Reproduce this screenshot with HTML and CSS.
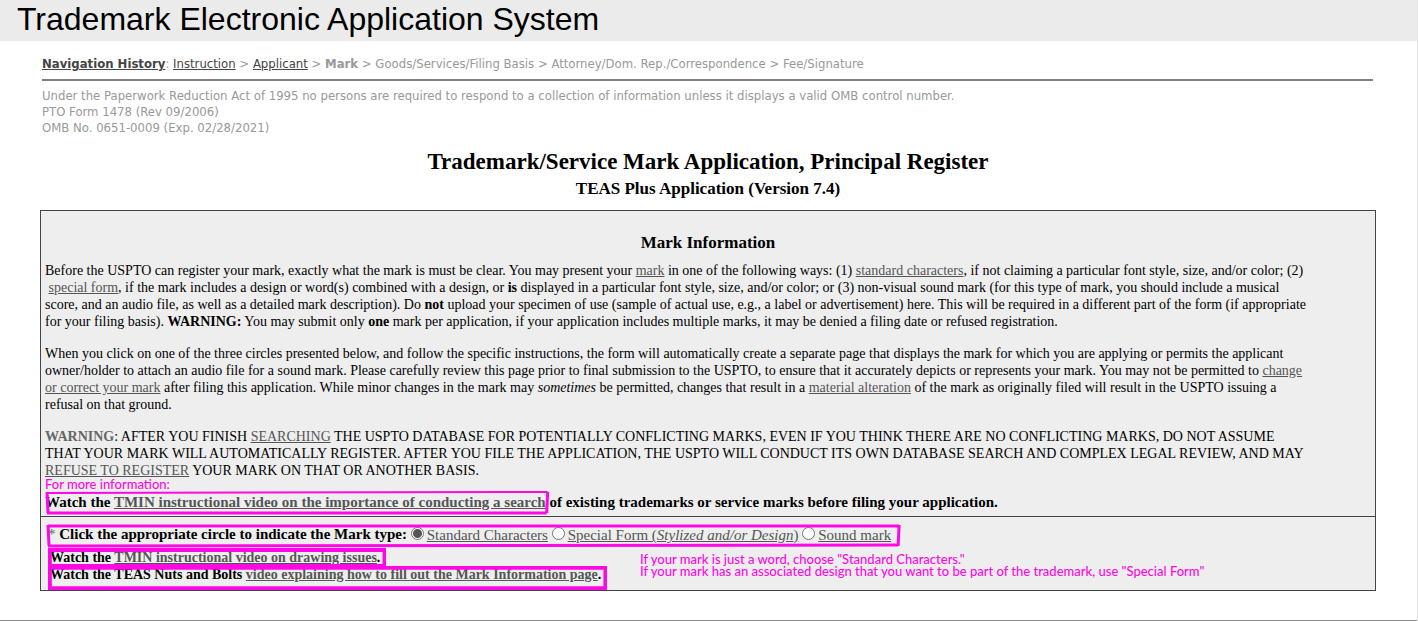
FILE: index.html
```html
<!DOCTYPE html>
<html lang="en">
<head>
<meta charset="utf-8">
<title>Trademark Electronic Application System</title>
<link rel="stylesheet" href="styles.css">
</head>
<body>
<div class="page">
  <header class="banner">Trademark Electronic Application System</header>
  <main class="content">
    <nav class="history" aria-label="Navigation History">
      <a class="history-title" href="#">Navigation History</a>: <a href="#">Instruction</a> &gt; <a href="#">Applicant</a> &gt; <b>Mark</b> &gt; Goods/Services/Filing Basis &gt; Attorney/Dom. Rep./Correspondence &gt; Fee/Signature
    </nav>
    <p class="notice">Under the Paperwork Reduction Act of 1995 no persons are required to respond to a collection of information unless it displays a valid OMB control number.<br>PTO Form 1478 (Rev 09/2006)<br>OMB No. 0651-0009 (Exp. 02/28/2021)</p>
    <h1 class="title">Trademark/Service Mark Application, Principal Register</h1>
    <h2 class="subtitle">TEAS Plus Application (Version 7.4)</h2>
    <form class="panel">
      <section class="info">
        <h3 class="info-title">Mark Information</h3>
        <p>Before the USPTO can register your mark, exactly what the mark is must be clear. You may present your <a href="#">mark</a> in one of the following ways: (1) <a href="#">standard characters</a>, if not claiming a particular font style, size, and/or color; (2)<br>&nbsp;<a href="#">special form</a>, if the mark includes a design or word(s) combined with a design, or <b>is</b> displayed in a particular font style, size, and/or color; or (3) non-visual sound mark (for this type of mark, you should include a musical<br>score, and an audio file, as well as a detailed mark description). Do <b>not</b> upload your specimen of use (sample of actual use, e.g., a label or advertisement) here. This will be required in a different part of the form (if appropriate<br>for your filing basis). <b>WARNING:</b> You may submit only <b>one</b> mark per application, if your application includes multiple marks, it may be denied a filing date or refused registration.</p>
        <p>When you click on one of the three circles presented below, and follow the specific instructions, the form will automatically create a separate page that displays the mark for which you are applying or permits the applicant<br>owner/holder to attach an audio file for a sound mark. Please carefully review this page prior to final submission to the USPTO, to ensure that it accurately depicts or represents your mark. You may not be permitted to <a href="#">change<br>or correct your mark</a> after filing this application. While minor changes in the mark may <i>sometimes</i> be permitted, changes that result in a <a href="#">material alteration</a> of the mark as originally filed will result in the USPTO issuing a<br>refusal on that ground.</p>
        <p><b class="muted">WARNING</b>: AFTER YOU FINISH <a href="#">SEARCHING</a> THE USPTO DATABASE FOR POTENTIALLY CONFLICTING MARKS, EVEN IF YOU THINK THERE ARE NO CONFLICTING MARKS, DO NOT ASSUME<br>THAT YOUR MARK WILL AUTOMATICALLY REGISTER. AFTER YOU FILE THE APPLICATION, THE USPTO WILL CONDUCT ITS OWN DATABASE SEARCH AND COMPLEX LEGAL REVIEW, AND MAY<br><a href="#">REFUSE TO REGISTER</a> YOUR MARK ON THAT OR ANOTHER BASIS.</p>
        <p class="watch">
          <span class="note note-more">For more information:</span>
          <span class="marked search">Watch the <a href="#">TMIN instructional video on the importance of conducting a search</a><svg class="ring" preserveAspectRatio="none" viewBox="0 0 496 24" aria-hidden="true"><path class="thin" d="M2 2L494 1"/><path d="M2 1L3 22M494 1L493 22"/><path d="M2 22L493 22"/></svg></span>
          of existing trademarks or service marks before filing your application.</p>
      </section>
      <section class="choices">
        <div class="marked types" role="radiogroup" aria-labelledby="type-label">
          <span class="star">*</span>
          <b id="type-label">Click the appropriate circle to indicate the Mark type:</b>
          <input type="radio" name="type" id="standard" checked><label for="standard"><a href="#">Standard Characters</a></label>
          <input type="radio" name="type" id="special"><label for="special"><a href="#">Special Form (<i>Stylized and/or Design</i>)</a></label>
          <input type="radio" name="type" id="sound"><label for="sound"><a href="#">Sound mark</a></label>
          <svg class="ring" preserveAspectRatio="none" viewBox="0 0 846 24" aria-hidden="true"><path d="M2 2L844 2M2 22L843 21"/><path d="M2 1L3 22M844 1L843 22"/></svg>
        </div>
        <div class="videos">
          <div class="video"><span class="marked tight">Watch the <a href="#">TMIN instructional video on drawing issues</a>.<svg class="ring" preserveAspectRatio="none" viewBox="0 0 354 20" aria-hidden="true"><path class="thick" d="M2 2H352V18H2Z"/></svg></span></div>
          <div class="video"><span class="marked low">Watch the TEAS Nuts and Bolts <a href="#">video explaining how to fill out the Mark Information page</a>.<svg class="ring" preserveAspectRatio="none" viewBox="0 0 584 26" aria-hidden="true"><path class="thick" d="M2 2H582V24H2Z"/></svg></span></div>
          <p class="note note-types">If your mark is just a word, choose "Standard Characters."<br>If your mark has an associated design that you want to be part of the trademark, use "Special Form"</p>
        </div>
      </section>
    </form>
  </main>
  <footer class="edge"></footer>
</div>
</body>
</html>
```
FILE: styles.css
```css
* { box-sizing: border-box; }
body { margin: 0; background: #fff; color: #000; font-family: "Liberation Serif", "Times New Roman", serif; font-size: 15px; line-height: 17px; }
.page { min-height: 100vh; display: flex; flex-direction: column; border-right: 1px solid #e4e4e4; }
.banner { background: #ebebeb; padding: 0 17px; height: 41px; font: 32px/39px "Liberation Sans", Arial, sans-serif; }
.content { flex: 1; padding: 15px 41px 28px 40px; }
a { color: #555; text-decoration: underline; }
.history { margin: 0 3px 0 2px; padding-bottom: 7px; border-bottom: 2px solid #808080; color: #999; font: 13px/16px "DejaVu Sans Condensed", Tahoma, sans-serif; }
.history a { color: #444; }
.history-title { font-weight: bold; }
.notice { margin: 7px 2px 0; color: #999; font: 13px/16px "DejaVu Sans Condensed", Tahoma, sans-serif; }
.title { margin: 13px 0 0; text-align: center; font-size: 23px; line-height: 26px; }
.subtitle { margin: 4px 0 0; text-align: center; font-size: 17px; line-height: 20px; }
.panel { margin: 11px 0 0; border: 1px solid #444; background: #eee; }
.info { padding: 22px 4px 5px; border-bottom: 1px solid #444; }
.info-title { margin: 0 0 9px; text-align: center; font-size: 17px; line-height: 20px; }
.info p { margin: 0 0 15px; font-size: 14px; }
.info .watch { position: relative; margin: 15px 0 0; font-size: 15px; font-weight: bold; }
.muted { color: #666; }
.marked { position: relative; }
.ring { position: absolute; left: 0; top: -3px; width: 100%; height: 24px; fill: none; stroke: #ff08e6; stroke-width: 3; pointer-events: none; }
.search .ring { width: calc(100% + 4px); }
.thin { stroke-width: 2; }
.thick { stroke-width: 4; }
.choices { padding: 7px 4px 7px 7px; }
.types { width: max-content; max-width: 100%; line-height: 20px; }
.types .ring { top: 0; left: -2px; width: calc(100% + 12px); }
.star { color: #666; }
.types input { appearance: none; width: 13px; height: 13px; margin: 0 3px 0 0; border: 1px solid #767676; border-radius: 50%; background: #fff; vertical-align: -1px; }
.types input:checked { background: radial-gradient(circle, #555 4px, #fff 5px); }
.types label { vertical-align: -1px; }
.videos { position: relative; margin-top: 4px; padding-left: 2px; font-size: 14px; font-weight: bold; }
.video .ring { left: -2px; width: calc(100% + 8px); }
.tight .ring { top: -2px; height: 20px; }
.low .ring { top: -1px; height: 24px; }
.info .note, .note { position: absolute; margin: 0; color: #ff08e6; font: 500 13px/12px Lato, sans-serif; white-space: nowrap; }
.info .note-more { left: 0; top: -16px; }
.note-types { left: 592px; top: 4px; }
.edge { height: 1px; background: #888; }
```
